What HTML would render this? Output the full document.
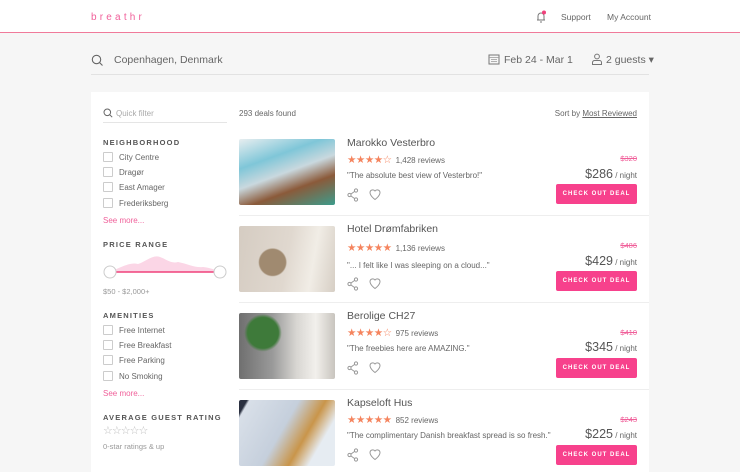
<!DOCTYPE html>
<html><head><meta charset="utf-8"><style>
*{margin:0;padding:0;box-sizing:border-box}
body{width:740px;height:462px;overflow:hidden;background:#f6f6f6;font-family:"Liberation Sans",sans-serif;color:#555;position:relative}
.hdr{position:absolute;left:0;top:0;width:740px;height:33px;background:#fff;border-bottom:1.5px solid #f07a9a}
.a{position:absolute;white-space:nowrap}
.r{position:absolute;white-space:nowrap;right:103px;text-align:right}
.logo{left:91px;top:12px;color:#f0609a;font-size:10px;letter-spacing:3.2px}
.card{position:absolute;left:91px;top:92px;width:558px;height:380px;background:#fff}
.h{font-size:7.5px;font-weight:bold;letter-spacing:1.2px;color:#555}
.cb{position:absolute;width:10px;height:10px;border:1px solid #ccc;border-radius:1px}
.lbl{font-size:8px;color:#666}
.pink{color:#f0609a;font-size:8px}
.img{position:absolute;left:239px;width:96px;height:66px;border-radius:2px}
.title{font-size:10.5px;color:#555}
.sr{display:flex;align-items:center;gap:4px}
.stars{color:#f5845e;font-size:10.5px;letter-spacing:-0.5px;line-height:10px}
.small{font-size:8px;color:#666}
.old{font-size:7.5px;color:#f0609a;text-decoration:line-through}
.price{font-size:12.5px;color:#555}
.btn{position:absolute;left:556px;width:81px;height:20px;background:#f7418c;border-radius:2px;color:#fff;font-size:6px;font-weight:bold;letter-spacing:1px;display:flex;align-items:center;justify-content:center}
.sep{position:absolute;left:239px;width:410px;height:1px;background:#eee}
</style></head><body>
<div class="hdr"></div>
<div class="a logo">breathr</div>
<svg class="a" style="left:534px;top:10px" width="14" height="14" viewBox="0 0 14 14"><path d="M3 10h8M4 10V6a3 3 0 0 1 6 0v4M6 12h2" stroke="#777" fill="none" stroke-width="1"/><circle cx="10" cy="2.5" r="2" fill="#f0407a"/></svg>
<div class="a" style="left:561px;top:12px;font-size:8.5px;color:#666">Support</div>
<div class="a" style="left:607px;top:12px;font-size:8.5px;color:#666">My Account</div>

<svg class="a" style="left:91px;top:54px" width="13" height="13" viewBox="0 0 13 13"><circle cx="5.5" cy="5.5" r="4.2" stroke="#666" fill="none" stroke-width="1.1"/><path d="M8.5 8.5l3 3" stroke="#666" stroke-width="1.1"/></svg>
<div class="a" style="left:114px;top:54px;font-size:10.5px;color:#666">Copenhagen, Denmark</div>
<svg class="a" style="left:488px;top:53px" width="12" height="12" viewBox="0 0 12 12"><rect x="1" y="2" width="10" height="9" stroke="#777" fill="none"/><path d="M1 4.5h10M3 6.5h6M3 8.5h6" stroke="#999" stroke-width=".8"/></svg>
<div class="a" style="left:504px;top:54px;font-size:10.5px;color:#666">Feb 24 - Mar 1</div>
<svg class="a" style="left:591px;top:53px" width="12" height="12" viewBox="0 0 12 12"><circle cx="6" cy="3.5" r="2.4" stroke="#777" fill="none"/><path d="M1.5 11.5v-2a2 2 0 0 1 2-2h5a2 2 0 0 1 2 2v2z" stroke="#777" fill="none"/></svg>
<div class="a" style="left:606px;top:54px;font-size:10.5px;color:#666">2 guests ▾</div>
<div class="a" style="left:91px;top:74px;width:558px;height:1px;background:#e2e2e2"></div>

<div class="card"></div>
<svg class="a" style="left:103px;top:108px" width="10" height="10" viewBox="0 0 10 10"><circle cx="4.3" cy="4.3" r="3.3" stroke="#666" fill="none"/><path d="M6.7 6.7l2.5 2.5" stroke="#666"/></svg>
<div class="a" style="left:116px;top:109px;font-size:8px;color:#aaa">Quick filter</div>
<div class="a" style="left:103px;top:122px;width:124px;height:1px;background:#e5e5e5"></div>
<div class="a h" style="left:103px;top:138px">NEIGHBORHOOD</div>
<div class="cb" style="left:103px;top:152px"></div><div class="a lbl" style="left:119px;top:153px">City Centre</div>
<div class="cb" style="left:103px;top:167px"></div><div class="a lbl" style="left:119px;top:168px">Dragør</div>
<div class="cb" style="left:103px;top:182px"></div><div class="a lbl" style="left:119px;top:183px">East Amager</div>
<div class="cb" style="left:103px;top:198px"></div><div class="a lbl" style="left:119px;top:199px">Frederiksberg</div>
<div class="a pink" style="left:103px;top:216px">See more...</div>
<div class="a h" style="left:103px;top:240px">PRICE RANGE</div>
<svg class="a" style="left:103px;top:252px" width="125" height="28" viewBox="0 0 125 28"><path d="M7 20 C20 14,28 10,35 12 C42 10,50 2,57 5 C63 7,68 12,75 10 C85 12,92 16,100 15 C108 16,113 18,117 20Z" fill="#fbd6e6"/><path d="M7 20H117" stroke="#f0407a" stroke-width="1.5"/><circle cx="7" cy="20" r="6" fill="#fff" stroke="#ccc"/><circle cx="117" cy="20" r="6" fill="#fff" stroke="#ccc"/></svg>
<div class="a" style="left:103px;top:287px;font-size:7.5px;color:#999">$50 - $2,000+</div>
<div class="a h" style="left:103px;top:311px">AMENITIES</div>
<div class="cb" style="left:103px;top:325px"></div><div class="a lbl" style="left:119px;top:326px">Free Internet</div>
<div class="cb" style="left:103px;top:340px"></div><div class="a lbl" style="left:119px;top:341px">Free Breakfast</div>
<div class="cb" style="left:103px;top:355px"></div><div class="a lbl" style="left:119px;top:356px">Free Parking</div>
<div class="cb" style="left:103px;top:371px"></div><div class="a lbl" style="left:119px;top:372px">No Smoking</div>
<div class="a pink" style="left:103px;top:389px">See more...</div>
<div class="a h" style="left:103px;top:413px">AVERAGE GUEST RATING</div>
<div class="a" style="left:103px;top:424px;font-size:11px;color:#bbb;letter-spacing:-1px">☆☆☆☆☆</div>
<div class="a" style="left:103px;top:442px;font-size:7.5px;color:#999">0-star ratings &amp; up</div>

<div class="a" style="left:239px;top:109px;font-size:8px;color:#666">293 deals found</div>
<div class="r" style="top:109px;font-size:8px;color:#666">Sort by <span style="text-decoration:underline">Most Reviewed</span></div>

<div class="img" style="top:139px;background:linear-gradient(160deg,#e8eef0 0%,#7fc6d8 30%,#c9d8de 50%,#8b5a3a 70%,#3d9c8c 100%)"></div>
<div class="img" style="top:226px;background:radial-gradient(circle at 35% 55%,#a08a70 0 18%,transparent 20%),linear-gradient(100deg,#d5ccc2,#e0d8cf 50%,#f1ede6 75%,#d6cec4)"></div>
<div class="img" style="top:313px;background:radial-gradient(circle at 25% 30%,#3e7a3a 0 18%,transparent 22%),linear-gradient(90deg,#6f6f6f,#9a9a9a 35%,#d8d6d2 60%,#f2f0ec 80%,#c8c4be)"></div>
<div class="img" style="top:400px;background:linear-gradient(120deg,#2a3040 0 6%,#d8dfe8 8%,#c5cfdc 45%,#c9954a 65%,#e6ecf2 80%)"></div>

<div class="sep" style="top:215px"></div><div class="sep" style="top:302px"></div><div class="sep" style="top:389px"></div>

<div class="a title" style="left:347px;top:137px">Marokko Vesterbro</div>
<div class="a sr" style="left:347px;top:155px"><span class="stars">★★★★☆</span><span class="small">1,428 reviews</span></div>
<div class="a small" style="left:347px;top:171px">"The absolute best view of Vesterbro!"</div>
<div class="r old" style="top:154px">$320</div>
<div class="r" style="top:165px"><span class="price">$286</span><span class="small"> / night</span></div>
<div class="btn" style="top:184px">CHECK OUT DEAL</div>

<div class="a title" style="left:347px;top:223px">Hotel Drømfabriken</div>
<div class="a sr" style="left:347px;top:243px"><span class="stars">★★★★★</span><span class="small">1,136 reviews</span></div>
<div class="a small" style="left:347px;top:261px">"... I felt like I was sleeping on a cloud..."</div>
<div class="r old" style="top:241px">$486</div>
<div class="r" style="top:252px"><span class="price">$429</span><span class="small"> / night</span></div>
<div class="btn" style="top:271px">CHECK OUT DEAL</div>

<div class="a title" style="left:347px;top:310px">Berolige CH27</div>
<div class="a sr" style="left:347px;top:328px"><span class="stars">★★★★☆</span><span class="small">975 reviews</span></div>
<div class="a small" style="left:347px;top:344px">"The freebies here are AMAZING."</div>
<div class="r old" style="top:328px">$410</div>
<div class="r" style="top:338px"><span class="price">$345</span><span class="small"> / night</span></div>
<div class="btn" style="top:358px">CHECK OUT DEAL</div>

<div class="a title" style="left:347px;top:397px">Kapseloft Hus</div>
<div class="a sr" style="left:347px;top:415px"><span class="stars">★★★★★</span><span class="small">852 reviews</span></div>
<div class="a small" style="left:347px;top:431px">"The complimentary Danish breakfast spread is so fresh."</div>
<div class="r old" style="top:415px">$243</div>
<div class="r" style="top:425px"><span class="price">$225</span><span class="small"> / night</span></div>
<div class="btn" style="top:445px">CHECK OUT DEAL</div>

<svg class="a" style="left:347px;top:188px" width="40" height="14" viewBox="0 0 40 14"><g stroke="#999" fill="none"><circle cx="2.5" cy="7" r="1.6"/><circle cx="9" cy="2.5" r="1.6"/><circle cx="9" cy="11.5" r="1.6"/><path d="M4 6l3.5-2.5M4 8l3.5 2.5"/><path d="M23 4.5a2.8 2.8 0 0 1 5 -1.5a2.8 2.8 0 0 1 5 1.5c0 3.5-5 7-5 7s-5-3.5-5-7z"/></g></svg>
<svg class="a" style="left:347px;top:277px" width="40" height="14" viewBox="0 0 40 14"><g stroke="#999" fill="none"><circle cx="2.5" cy="7" r="1.6"/><circle cx="9" cy="2.5" r="1.6"/><circle cx="9" cy="11.5" r="1.6"/><path d="M4 6l3.5-2.5M4 8l3.5 2.5"/><path d="M23 4.5a2.8 2.8 0 0 1 5 -1.5a2.8 2.8 0 0 1 5 1.5c0 3.5-5 7-5 7s-5-3.5-5-7z"/></g></svg>
<svg class="a" style="left:347px;top:361px" width="40" height="14" viewBox="0 0 40 14"><g stroke="#999" fill="none"><circle cx="2.5" cy="7" r="1.6"/><circle cx="9" cy="2.5" r="1.6"/><circle cx="9" cy="11.5" r="1.6"/><path d="M4 6l3.5-2.5M4 8l3.5 2.5"/><path d="M23 4.5a2.8 2.8 0 0 1 5 -1.5a2.8 2.8 0 0 1 5 1.5c0 3.5-5 7-5 7s-5-3.5-5-7z"/></g></svg>
<svg class="a" style="left:347px;top:448px" width="40" height="14" viewBox="0 0 40 14"><g stroke="#999" fill="none"><circle cx="2.5" cy="7" r="1.6"/><circle cx="9" cy="2.5" r="1.6"/><circle cx="9" cy="11.5" r="1.6"/><path d="M4 6l3.5-2.5M4 8l3.5 2.5"/><path d="M23 4.5a2.8 2.8 0 0 1 5 -1.5a2.8 2.8 0 0 1 5 1.5c0 3.5-5 7-5 7s-5-3.5-5-7z"/></g></svg>
</body></html>
